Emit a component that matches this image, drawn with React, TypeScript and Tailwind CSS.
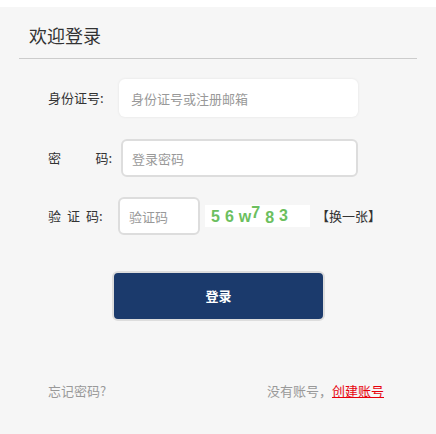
import React from 'react';

const font = { fontFamily: '"Noto Sans CJK SC", "Liberation Sans", sans-serif' };

const App = () => {
  return (
    <div className="w-[436px] h-[434px] bg-white pt-[7px]" style={font}>
      <div className="h-[427px] bg-[#f6f6f6] px-[19px]">
        <div className="pt-[15px] pb-[10px] border-b border-[#cccccc] pl-[10px]">
          <h2 className="text-[18px] leading-[26px] text-[#333]">欢迎登录</h2>
        </div>

        <div className="flex flex-col pl-[29px] pt-[20px]">
          {/* 身份证号 */}
          <div className="flex items-center h-[38px]">
            <span className="w-[71px] text-[13px] text-[#333]">身份证号:</span>
            <input
              className="w-[239px] h-[38px] rounded-[6px] bg-white px-3 text-[13px] text-[#333] placeholder:text-[#999] outline-none shadow-[0_0_3px_rgba(0,0,0,0.08)]"
              placeholder="身份证号或注册邮箱"
            />
          </div>

          {/* 密码 */}
          <div className="flex items-center h-[38px] mt-[22px]">
            <span className="w-[73px] flex justify-between pr-[9px] text-[13px] text-[#333]">
              <span>密</span>
              <span>码:</span>
            </span>
            <input
              type="password"
              className="w-[237px] h-[38px] rounded-[6px] bg-white border-2 border-[#dddddd] px-[9px] text-[13px] text-[#333] placeholder:text-[#999] outline-none"
              placeholder="登录密码"
            />
          </div>

          {/* 验证码 */}
          <div className="flex items-center h-[38px] mt-[20px]">
            <span className="w-[70px] flex gap-[6px] whitespace-nowrap text-[13px] text-[#333]">
              <span>验</span>
              <span>证</span>
              <span>码:</span>
            </span>
            <input
              className="w-[82px] h-[38px] rounded-[6px] bg-white border-2 border-[#dddddd] px-[9px] text-[13px] text-[#333] placeholder:text-[#999] outline-none"
              placeholder="验证码"
            />
            <div
              className="ml-[5px] w-[105px] h-[22px] bg-white flex items-end pl-[6px] pb-[1px] text-[16px] font-bold text-[#6cbf5f] leading-[18px]"
              style={{ fontFamily: '"Liberation Sans", sans-serif' }}
            >
              <span>5</span>
              <span className="ml-[5px]">6</span>
              <span className="ml-[5px]">w</span>
              <span className="relative -top-[4px]">7</span>
              <span className="ml-[5px] relative top-[1px]">8</span>
              <span className="ml-[5px] relative -top-[1px]">3</span>
            </div>
            <span className="ml-[6px] text-[13px] text-[#333]">【换一张】</span>
          </div>

          {/* 登录 */}
          <div className="pl-[64px] mt-[36px]">
            <button className="w-[213px] h-[50px] rounded-[6px] bg-[#1b3a6c] border-2 border-[#dddddd] text-white text-[13px] font-bold">
              登录
            </button>
          </div>

          {/* bottom links */}
          <div className="flex justify-between items-center mt-[60px] pr-[33px] text-[13px]">
            <span className="text-[#999]">忘记密码?</span>
            <span className="text-[#999]">
              没有账号，<a className="text-red-600 underline" href="#">创建账号</a>
            </span>
          </div>
        </div>
      </div>
    </div>
  );
};

export default App;
